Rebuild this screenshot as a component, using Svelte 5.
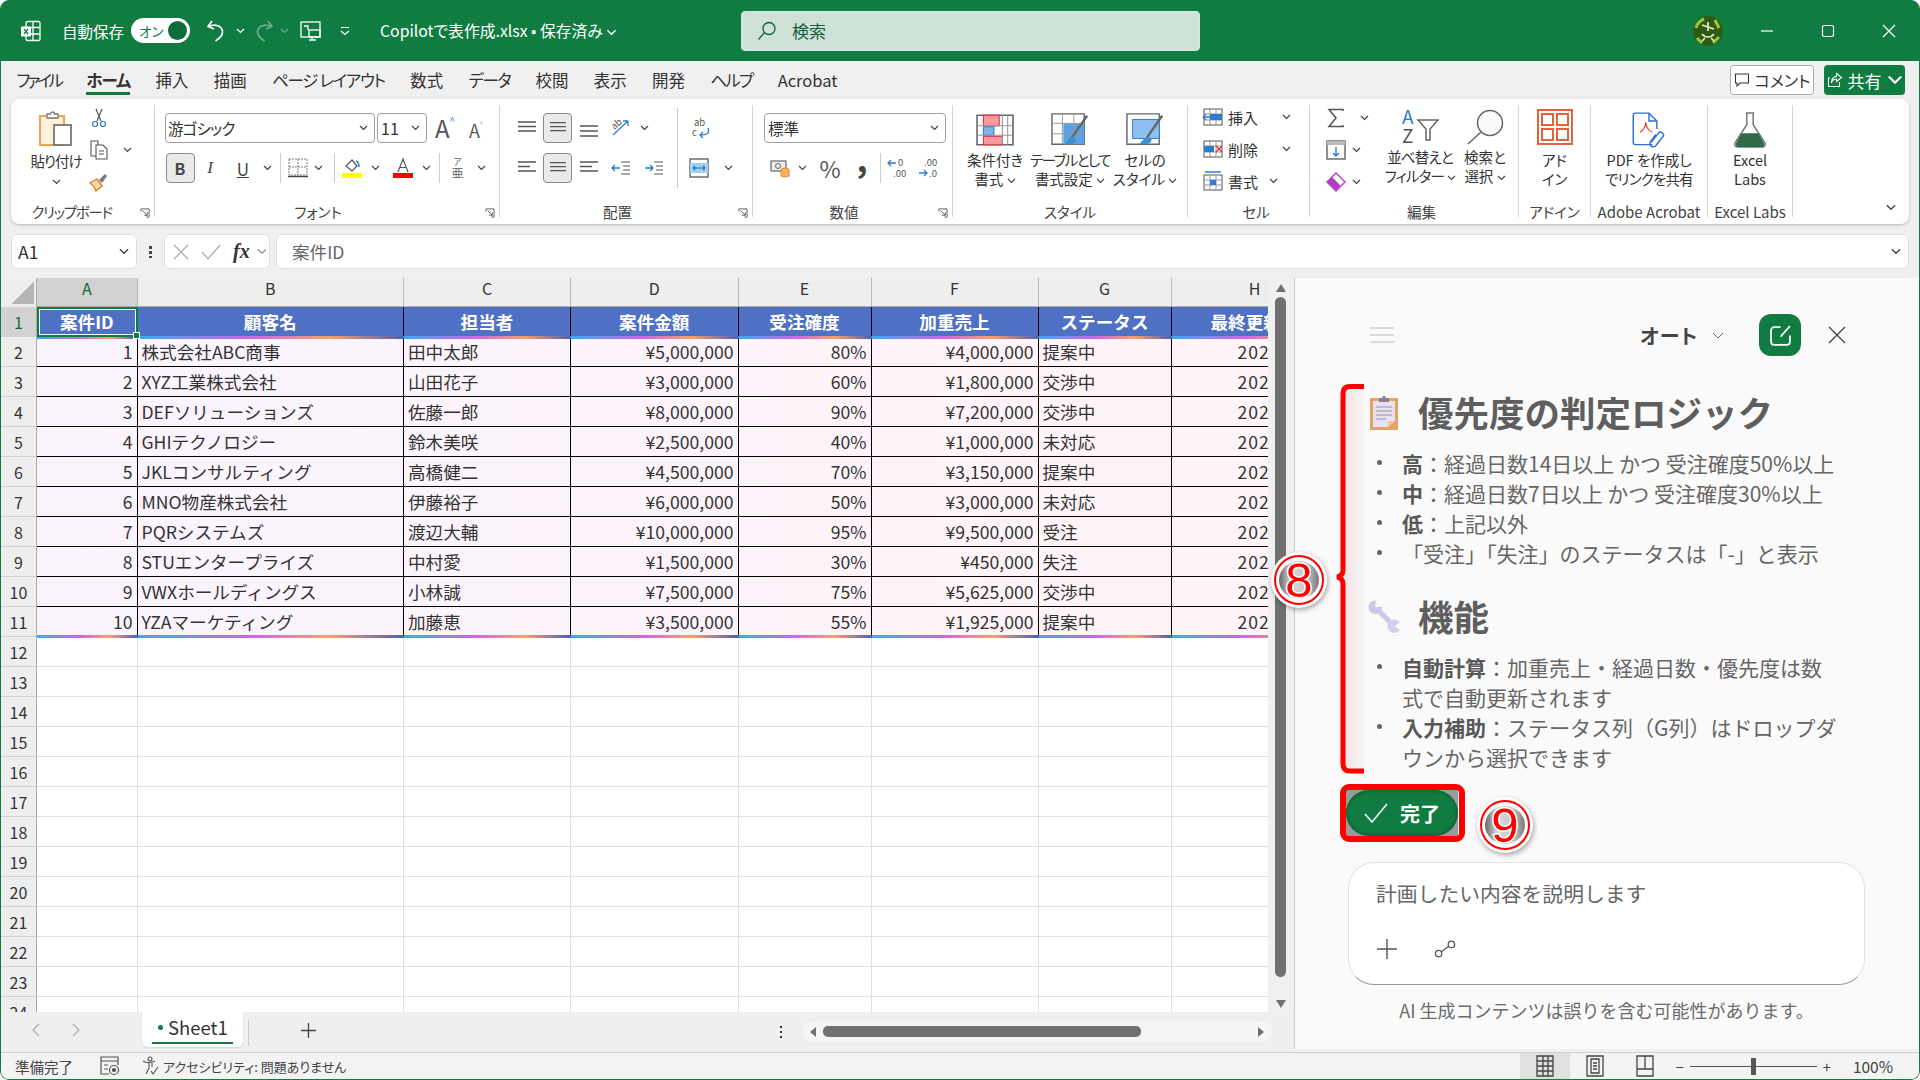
<script lang="ts">
  const cols = ["A", "B", "C", "D", "E", "F", "G", "H"];
  const headers = ["案件ID", "顧客名", "担当者", "案件金額", "受注確度", "加重売上", "ステータス", "最終更新日"];
  const rows = [
    [1, "株式会社ABC商事", "田中太郎", "¥5,000,000", "80%", "¥4,000,000", "提案中", "2025/10/01"],
    [2, "XYZ工業株式会社", "山田花子", "¥3,000,000", "60%", "¥1,800,000", "交渉中", "2025/10/05"],
    [3, "DEFソリューションズ", "佐藤一郎", "¥8,000,000", "90%", "¥7,200,000", "交渉中", "2025/10/10"],
    [4, "GHIテクノロジー", "鈴木美咲", "¥2,500,000", "40%", "¥1,000,000", "未対応", "2025/10/12"],
    [5, "JKLコンサルティング", "高橋健二", "¥4,500,000", "70%", "¥3,150,000", "提案中", "2025/10/15"],
    [6, "MNO物産株式会社", "伊藤裕子", "¥6,000,000", "50%", "¥3,000,000", "未対応", "2025/10/18"],
    [7, "PQRシステムズ", "渡辺大輔", "¥10,000,000", "95%", "¥9,500,000", "受注", "2025/10/20"],
    [8, "STUエンタープライズ", "中村愛", "¥1,500,000", "30%", "¥450,000", "失注", "2025/10/22"],
    [9, "VWXホールディングス", "小林誠", "¥7,500,000", "75%", "¥5,625,000", "交渉中", "2025/10/25"],
    [10, "YZAマーケティング", "加藤恵", "¥3,500,000", "55%", "¥1,925,000", "提案中", "2025/10/28"],
  ];
  const rightCols = [0, 3, 4, 5];
  const emptyRows = Array.from({ length: 13 }, (_, i) => i + 12);
  // kana in the ribbon font is narrower than in the CJK fallback, so each tab gets its own tracking
  const tabs = [
    { t: "ファイル", ls: -3.2 },
    { t: "ホーム", ls: -1 },
    { t: "挿入", ls: 0 },
    { t: "描画", ls: 0 },
    { t: "ページ レイアウト", ls: -1.3 },
    { t: "数式", ls: 0 },
    { t: "データ", ls: -1.5 },
    { t: "校閲", ls: 0 },
    { t: "表示", ls: 0 },
    { t: "開発", ls: 0 },
    { t: "ヘルプ", ls: -1.8 },
    { t: "Acrobat", ls: 0 },
  ];
</script>

{#snippet chev()}
  <svg class="chev" viewBox="0 0 9 6"><path d="M1 1l3.5 3.5L8 1" /></svg>
{/snippet}

{#snippet launcher()}
  <svg class="launcher" viewBox="0 0 11 11"><path d="M1 4V1h9v9H7M3 3l5 5M8 4.5V8H4.5" /></svg>
{/snippet}

{#snippet lines(w1: number, w2: number, w3: number, x: number)}
  <svg class="ico18" viewBox="0 0 18 16">
    <path d="M{x} 2h{w1}M{(18 - w2) * (x === 0 ? 0 : x === 1 ? 0.5 : 1)} 6.5h{w2}M{x} 11h{w3}" stroke="#555" stroke-width="1.4" fill="none" />
  </svg>
{/snippet}

<div class="window">
  <header class="titlebar">
    <svg class="xl-logo" viewBox="0 0 22 22" fill="none" stroke="#fff" stroke-width="1.3">
      <rect x="6" y="1.5" width="14" height="19" rx="1.5" />
      <path d="M13 1.5v19M6 7.5h14M6 14h14" />
      <rect x="1" y="6.5" width="10" height="10" rx="1" fill="#fff" stroke="none" />
      <path d="M4 9l4 5M8 9l-4 5" stroke="#107c41" />
    </svg>
    <span class="autosave">自動保存</span>
    <span class="toggle"><span class="on">オン</span><span class="knob"></span></span>
    <svg class="undo" viewBox="0 0 20 24" fill="none" stroke="#fff" stroke-width="1.6">
      <path d="M6 2L2 7.5l6 2.5M2.5 7.5c6-3 14-1 14 5.5 0 4-3 6-7 9" />
    </svg>
    <span class="qchev">{@render chev()}</span>
    <svg class="redo" viewBox="0 0 20 24" fill="none" stroke="#6fb08d" stroke-width="1.6">
      <path d="M14 2l4 5.500l-6 2.500M17.500 7.500c-6-3-14-1-14 5.500 0 4 3 6 7 9" />
    </svg>
    <span class="qchev dim">{@render chev()}</span>
    <svg class="screen" viewBox="0 0 22 22" fill="none" stroke="#fff" stroke-width="1.3">
      <rect x="1" y="2" width="19" height="15" />
      <rect x="9" y="10" width="11" height="7" />
      <path d="M4 6h4v4M12 17v3M9 20h7" />
    </svg>
    <svg class="qat-more" viewBox="0 0 10 10" fill="none" stroke="#fff" stroke-width="1.1">
      <path d="M1 1.500h8M1 5l4 3.500L9 5" />
    </svg>
    <span class="fname">Copilotで表作成.xlsx • 保存済み {@render chev()}</span>
    <div class="search">
      <svg viewBox="0 0 20 20" fill="none" stroke="#14603a" stroke-width="1.3"><circle cx="12" cy="7.500" r="6" /><path d="M7.500 11.500L1.500 18.500" /></svg>
      <span>検索</span>
    </div>
    <svg class="avatar" viewBox="0 0 30 30">
      <circle cx="15" cy="15" r="15" fill="#2f5a16" />
      <path d="M3 12a13 13 0 0 1 8-9M22 4l4 8M4 22l5 5M20 27l6-6" stroke="#9ac73a" stroke-width="3" fill="none" />
      <path d="M9 9l12 4M15 6v9M9 18c3 4 9 4 12 0M12 22l-3 3M18 22l3 3" stroke="#e6efc8" stroke-width="1.600" fill="none" />
    </svg>
    <div class="winbtn"><svg viewBox="0 0 14 14"><path d="M1 7h12" /></svg></div>
    <div class="winbtn"><svg viewBox="0 0 14 14"><rect x="1.500" y="1.500" width="11" height="11" rx="1.500" /></svg></div>
    <div class="winbtn"><svg viewBox="0 0 14 14"><path d="M1 1l12 12M13 1L1 13" /></svg></div>
  </header>

  <nav class="tabs">
    {#each tabs as tab, i}
      <span class="tab" class:active={i === 1} style:letter-spacing="{tab.ls}px">{tab.t}</span>
    {/each}
    <div class="tab-actions">
      <button class="comment">
        <svg viewBox="0 0 16 16" fill="none" stroke="#333" stroke-width="1.100"><path d="M1.500 2h13v9H6l-3 3v-3H1.500z" /></svg>
        コメント
      </button>
      <button class="share">
        <svg viewBox="0 0 16 16" fill="none" stroke="#fff" stroke-width="1.100"><path d="M3 6H1.500v8.500h11V10M9.500 1.500l5 4-5 4V7C6.500 7 5 8.500 4.500 11c0-4 1.500-6.500 5-6.500z" /></svg>
        共有 {@render chev()}
      </button>
    </div>
  </nav>

  <section class="ribbon">
    <div class="group g-clip">
      <div class="body clip-body">
        <div class="paste">
          <svg viewBox="0 0 34 36">
            <rect x="1" y="6" width="24" height="29" fill="#fdf1dd" stroke="#eda44b" stroke-width="2" />
            <path d="M8 8V4h3.500a2 2 0 0 1 4 0H19v4z" fill="#fff" stroke="#777" stroke-width="1.300" />
            <rect x="15" y="15" width="17" height="20" fill="#fff" stroke="#666" stroke-width="1.600" />
          </svg>
          <span>貼り付け</span>
          {@render chev()}
        </div>
        <div class="clip-col">
          <svg class="ico20" viewBox="0 0 20 20" fill="none" stroke-width="1.200">
            <path d="M7 1l5 12M13 1L8 13" stroke="#555" />
            <circle cx="6" cy="16" r="2.500" stroke="#2b7cd3" />
            <circle cx="14" cy="16" r="2.500" stroke="#2b7cd3" />
          </svg>
          <div class="copy-row">
            <svg class="ico20" viewBox="0 0 20 20" fill="#fff" stroke="#555" stroke-width="1.100">
              <path d="M2 1h7v15H2z" />
              <path d="M7 5h7l4 4v10H7z" />
              <path d="M10 11h5M10 14h5" />
            </svg>
            {@render chev()}
          </div>
          <svg class="ico20" viewBox="0 0 20 20">
            <path d="M1 11l7-4 5 7-6 5c-1-3-3-6-6-8z" fill="#fbd9a8" stroke="#e57f1f" stroke-width="1.400" />
            <path d="M10 8l6-6 2 2-5 7z" fill="#777" />
          </svg>
        </div>
      </div>
      <div class="label launch narrow">クリップボード{@render launcher()}</div>
    </div>

    <div class="group g-font">
      <div class="body">
        <div class="row font-row1">
          <div class="select font-name"><span class="narrow-1">游ゴシック</span> {@render chev()}</div>
          <div class="select font-size">11 {@render chev()}</div>
          <span class="grow-a">A<sup>^</sup></span>
          <span class="shrink-a">A<sup>˅</sup></span>
        </div>
        <div class="row font-row2">
          <span class="toggle-btn bold">B</span>
          <span class="fmt italic">I</span>
          <span class="fmt under">U</span>
          {@render chev()}
          <span class="sep"></span>
          <svg class="ico20" viewBox="0 0 20 20" fill="none" stroke="#777" stroke-width="1" stroke-dasharray="2 1">
            <rect x="1" y="1" width="18" height="16" />
            <path d="M10 1v16M1 9h18" />
            <path d="M0 18.500h20" stroke="#444" stroke-width="1.500" stroke-dasharray="none" />
          </svg>
          {@render chev()}
          <span class="sep"></span>
          <svg class="ico20" viewBox="0 0 20 20">
            <path d="M4 8l6-6 5 6-5 5z" fill="#fff" stroke="#555" stroke-width="1.200" />
            <path d="M14 3c3 1 3 4 3 6" stroke="#2b7cd3" stroke-width="1.500" fill="none" />
            <rect x="0" y="15" width="20" height="5" fill="#ffff00" />
          </svg>
          {@render chev()}
          <svg class="ico20 color-a" viewBox="0 0 20 20">
            <path d="M5 14L10 1l5 13M7 9.500h6" fill="none" stroke="#555" stroke-width="1.200" />
            <rect x="0" y="15" width="20" height="5" fill="#ff0000" />
          </svg>
          {@render chev()}
          <span class="sep"></span>
          <span class="furi"><small>ア</small>亜</span>
          {@render chev()}
        </div>
      </div>
      <div class="label launch">フォント{@render launcher()}</div>
    </div>

    <div class="group g-align">
      <div class="body">
        <div class="row align-row1">
          {@render lines(18, 18, 18, 0)}
          <span class="toggle-btn">{@render lines(18, 18, 18, 0)}</span>
          <svg class="ico18 low" viewBox="0 0 18 16"><path d="M0 4h18M0 9h18M0 14h18" stroke="#555" stroke-width="1.400" /></svg>
          <svg class="ico20" viewBox="0 0 20 20">
            <path d="M2 17L17 3M17 3h-5M17 3v5" stroke="#2b7cd3" stroke-width="1.300" fill="none" />
            <text x="1" y="10" class="tiny" transform="rotate(-40 5 8)">ab</text>
          </svg>
          {@render chev()}
          <span class="sep tall"></span>
          <svg class="ico20 wrap" viewBox="0 0 20 20">
            <text x="3" y="8" class="tiny">ab</text>
            <text x="1" y="18" class="tiny">c</text>
            <path d="M17 10c2 6-2 7-8 7m3-3l-3 3 3 3" stroke="#2b7cd3" stroke-width="1.300" fill="none" />
          </svg>
        </div>
        <div class="row align-row2">
          {@render lines(18, 12, 18, 0)}
          <span class="toggle-btn">{@render lines(18, 18, 18, 0)}</span>
          {@render lines(18, 12, 18, 0)}
          <svg class="ico20" viewBox="0 0 20 20">
            <path d="M10 4h9M10 16h9M12 8h7M12 12h7" stroke="#555" stroke-width="1.200" />
            <path d="M9 10H1m3-3l-3 3 3 3" stroke="#2b7cd3" stroke-width="1.300" fill="none" />
          </svg>
          <svg class="ico20" viewBox="0 0 20 20">
            <path d="M10 4h9M10 16h9M12 8h7M12 12h7" stroke="#555" stroke-width="1.200" />
            <path d="M1 10h8M6 7l3 3-3 3" stroke="#2b7cd3" stroke-width="1.300" fill="none" />
          </svg>
          <span class="sep tall"></span>
          <svg class="ico20" viewBox="0 0 20 20">
            <rect x="1" y="1" width="18" height="18" fill="#fff" stroke="#555" stroke-width="1.300" />
            <rect x="1" y="5" width="18" height="10" fill="#9fd0f2" />
            <path d="M4 10h12M4 10l2-2M4 10l2 2M16 10l-2-2M16 10l-2 2" stroke="#1c6fc4" stroke-width="1.100" fill="none" />
          </svg>
          {@render chev()}
        </div>
      </div>
      <div class="label launch">配置{@render launcher()}</div>
    </div>

    <div class="group g-num">
      <div class="body">
        <div class="row"><div class="select num-fmt">標準 {@render chev()}</div></div>
        <div class="row num-row2">
          <svg class="ico20" viewBox="0 0 20 20">
            <rect x="1" y="3" width="15" height="10" fill="#eee" stroke="#666" stroke-width="1.200" />
            <circle cx="8" cy="8" r="2.500" fill="none" stroke="#666" />
            <ellipse cx="15" cy="12" rx="4" ry="2" fill="#f6b26b" stroke="#e57f1f" />
            <path d="M11 12v6c0 1 8 1 8 0v-6" fill="#f6b26b" stroke="#e57f1f" />
          </svg>
          {@render chev()}
          <span class="pct">%</span>
          <span class="comma">,</span>
          <span class="sep"></span>
          <span class="dec"><svg viewBox="0 0 22 24"><path d="M9 7H1m3-3L1 7l3 3" stroke="#2b7cd3" stroke-width="1.300" fill="none" /><text x="11" y="10" class="tiny">0</text><text x="6" y="21" class="tiny">.00</text></svg></span>
          <span class="dec"><svg viewBox="0 0 22 24"><path d="M1 17h8M6 14l3 3-3 3" stroke="#2b7cd3" stroke-width="1.300" fill="none" /><text x="6" y="10" class="tiny">.00</text><text x="11" y="21" class="tiny">.0</text></svg></span>
        </div>
      </div>
      <div class="label launch">数値{@render launcher()}</div>
    </div>

    <div class="group g-style">
      <div class="body styles">
        <div class="big w60">
          <svg class="big-ico" viewBox="0 0 36 30">
            <path d="M1 1h34v28H1z" fill="#fff" stroke="#666" stroke-width="1.500" />
            <rect x="7" y="1" width="15" height="10" fill="#fb9aa2" stroke="#d8333c" />
            <rect x="7" y="12" width="10" height="8" fill="#7db7e8" stroke="#2b7cd3" />
            <rect x="7" y="21" width="18" height="8" fill="#fb9aa2" stroke="#d8333c" />
            <path d="M25 1v28M30 1v28M1 11h34M1 20h34" stroke="#999" fill="none" />
          </svg>
          <span>条件付き<br />書式 {@render chev()}</span>
        </div>
        <div class="big w80">
          <svg class="big-ico" viewBox="0 0 40 36">
            <path d="M1 1h34v32H1z" fill="#fff" stroke="#666" stroke-width="1.500" />
            <rect x="13" y="11" width="22" height="22" fill="#5aa3e0" />
            <path d="M12 1v32M24 1v32M1 11h34M1 22h34" stroke="#999" fill="none" />
            <path d="M38 3L22 26" stroke="#666" stroke-width="2.500" />
            <path d="M23 25c-4 0-5 5-9 7 6 2 13 1 13-4z" fill="#3f8ed4" />
          </svg>
          <span><span class="narrow">テーブルとして</span><br />書式設定 {@render chev()}</span>
        </div>
        <div class="big w60">
          <svg class="big-ico" viewBox="0 0 40 36">
            <path d="M1 1h34v32H1z" fill="#fff" stroke="#666" stroke-width="1.500" />
            <rect x="7" y="7" width="28" height="20" fill="#8dbff0" stroke="#2b7cd3" />
            <path d="M38 3L22 26" stroke="#666" stroke-width="2.500" />
            <path d="M23 25c-4 0-5 5-9 7 6 2 13 1 13-4z" fill="#3f8ed4" />
          </svg>
          <span>セルの<br />スタイル {@render chev()}</span>
        </div>
      </div>
      <div class="label">スタイル</div>
    </div>

    <div class="group g-cell">
      <div class="body cell-body">
        <div class="cellrow">
          <svg class="ico20" viewBox="0 0 20 18"><rect x="1" y="1" width="18" height="16" fill="#fff" stroke="#555" /><path d="M7 1v16M13 1v16M1 6h18M1 12h18" stroke="#999" /><rect x="7" y="6" width="12" height="6" fill="#2b7cd3" /><path d="M9 9H0m3-3L0 9l3 3" stroke="#2b7cd3" stroke-width="1.300" fill="none" /></svg>
          <span>挿入</span>{@render chev()}
        </div>
        <div class="cellrow">
          <svg class="ico20" viewBox="0 0 20 18"><rect x="1" y="1" width="18" height="16" fill="#fff" stroke="#555" /><path d="M7 1v16M13 1v16M1 6h18M1 12h18" stroke="#999" /><rect x="1" y="6" width="10" height="6" fill="#2b7cd3" /><path d="M13 6l6 6M19 6l-6 6" stroke="#e8333c" stroke-width="1.500" /></svg>
          <span>削除</span>{@render chev()}
        </div>
        <div class="cellrow fmt-row">
          <svg class="ico20" viewBox="0 0 20 20"><rect x="1" y="4" width="18" height="15" fill="#fff" stroke="#555" /><path d="M7 4v15M13 4v15M1 9h18M1 14h18" stroke="#999" /><rect x="7" y="9" width="6" height="5" fill="#2b7cd3" /><path d="M2 1h16" stroke="#2b7cd3" stroke-width="1.500" /></svg>
          <span>書式</span>{@render chev()}
        </div>
      </div>
      <div class="label">セル</div>
    </div>

    <div class="group g-edit">
      <div class="body edit-body">
        <div class="edit-col">
          <div class="editrow sum"><svg class="ico20" viewBox="0 0 18 20" fill="none" stroke="#555" stroke-width="1.500"><path d="M16 3V1.500H2L9 10l-7 8.500h14V17" /></svg>{@render chev()}</div>
          <div class="editrow"><svg class="ico20" viewBox="0 0 20 20"><rect x="1" y="1" width="18" height="18" fill="#fff" stroke="#555" stroke-width="1.300" /><rect x="1" y="1" width="18" height="4" fill="#bbb" /><path d="M10 7v9M7 13l3 3 3-3" stroke="#2b7cd3" stroke-width="1.400" fill="none" /></svg>{@render chev()}</div>
          <div class="editrow"><svg class="ico20" viewBox="0 0 20 20"><path d="M10 1l9 9-9 9-9-9z" fill="#fff" stroke="#b040c0" stroke-width="1.400" /><path d="M5.500 14.500L1 10l5-5 8.500 8.500-4.500 5z" fill="#b040c0" /></svg>{@render chev()}</div>
        </div>
        <div class="big w70">
          <svg class="big-ico" viewBox="0 0 38 36">
            <text x="1" y="15" class="az blue">A</text>
            <text x="1" y="34" class="az">Z</text>
            <path d="M17 11h20l-8 9v11h-4V20z" fill="#fff" stroke="#666" stroke-width="1.500" />
          </svg>
          <span class="narrow-1">並べ替えと<br />フィルター {@render chev()}</span>
        </div>
        <div class="big w60">
          <svg class="big-ico" viewBox="0 0 38 36">
            <circle cx="24" cy="14" r="12.500" fill="#fafafa" stroke="#666" stroke-width="1.500" />
            <path d="M15 23L2 35" stroke="#666" stroke-width="1.500" />
          </svg>
          <span>検索と<br />選択 {@render chev()}</span>
        </div>
      </div>
      <div class="label">編集</div>
    </div>

    <div class="group g-add">
      <div class="body">
        <div class="big full">
          <svg class="big-ico tall" viewBox="0 0 36 36" fill="none" stroke="#e2623a" stroke-width="2">
            <rect x="1" y="1" width="34" height="34" />
            <rect x="5" y="5" width="11" height="11" />
            <rect x="20" y="5" width="11" height="11" />
            <rect x="5" y="20" width="11" height="11" />
            <rect x="20" y="20" width="11" height="11" />
          </svg>
          <span>アド<br />イン</span>
        </div>
      </div>
      <div class="label">アドイン</div>
    </div>

    <div class="group g-acro">
      <div class="body">
        <div class="big full">
          <svg class="big-ico" viewBox="0 0 30 32" fill="none" stroke="#2f6fe0" stroke-width="1.300">
            <path d="M18 29H3a2 2 0 0 1-2-2V3a2 2 0 0 1 2-2h12l7 7v7" />
            <path d="M15 1v7h7" />
            <path d="M7 18c3-2 5-6 5-9 0 4 3 8 6 9" stroke="#d33" stroke-width="1" />
            <path d="M17 27l7-9a3 3 0 0 1 4 3l-7 9a3 3 0 0 1-5-3l5-7" />
          </svg>
          <span>PDF を作成し<br /><span class="narrow-1">でリンクを共有</span></span>
        </div>
      </div>
      <div class="label latin">Adobe Acrobat</div>
    </div>

    <div class="group g-labs">
      <div class="body">
        <div class="big full">
          <svg class="big-ico" viewBox="0 0 32 34">
            <path d="M12 1h8M13 1v11L2 29c-1 2 0 4 2 4h24c2 0 3-2 2-4L19 12V1" fill="#fff" stroke="#777" stroke-width="1.400" />
            <path d="M8 20h16l5 9c1 2 0 4-2 4H5c-2 0-3-2-2-4z" fill="#2f6b4a" />
          </svg>
          <span>Excel<br />Labs</span>
        </div>
      </div>
      <div class="label latin">Excel Labs</div>
    </div>

    <svg class="collapse chev" viewBox="0 0 9 6"><path d="M1 1l3.500 3.500L8 1" /></svg>
  </section>

  <div class="formula">
    <div class="namebox">A1 {@render chev()}</div>
    <span class="vdots"></span>
    <div class="fxbox">
      <svg viewBox="0 0 16 16" fill="none" stroke="#aaa" stroke-width="1.200"><path d="M1 1l14 14M15 1L1 15" /></svg>
      <svg viewBox="0 0 20 16" fill="none" stroke="#aaa" stroke-width="1.200"><path d="M1 8l6 7L19 1" /></svg>
      <span class="fx">fx</span>
      {@render chev()}
    </div>
    <div class="fbar"><span>案件ID</span>{@render chev()}</div>
  </div>

  <main class="workspace">
    <div class="sheet-col">
      <div class="sheet-area">
        <div class="grid">
          <div class="corner"><span></span></div>
          {#each cols as c, i}
            <div class="ch" class:sel={i === 0}>{c}</div>
          {/each}
          <div class="rh sel">1</div>
          {#each headers as h}
            <div class="hd">{h}</div>
          {/each}
          {#each rows as r, i}
            <div class="rh">{i + 2}</div>
            {#each r as v, j}
              <div
                class="td"
                class:right={rightCols.includes(j)}
                class:date={j === 7}
                class:last={i === rows.length - 1}
              >{v}</div>
            {/each}
          {/each}
          {#each emptyRows as n}
            <div class="rh">{n}</div>
            {#each cols as _}
              <div class="blank"></div>
            {/each}
          {/each}
          <div class="selection"><span></span></div>
        </div>
        <div class="vscroll">
          <i class="tri-up"></i>
          <b></b>
          <i class="tri-down"></i>
        </div>
      </div>
      <div class="sheetbar">
        <svg class="nav" viewBox="0 0 8 14"><path d="M7 1L1 7l6 6" /></svg>
        <svg class="nav" viewBox="0 0 8 14"><path d="M1 1l6 6-6 6" /></svg>
        <div class="sheet-tab"><i></i>Sheet1</div>
        <span class="tab-sep"></span>
        <svg class="add" viewBox="0 0 16 16"><path d="M8 0v16M0 8h16" /></svg>
        <span class="more"></span>
        <div class="hscroll">
          <i class="tri-left"></i>
          <b></b>
          <i class="tri-right"></i>
        </div>
      </div>
    </div>

    <aside class="panel">
      <div class="panel-head">
        <svg class="menu" viewBox="0 0 24 16"><path d="M0 1h24M0 8h24M0 15h24" /></svg>
        <strong class="mode">オート</strong>
        <svg class="mode-chev" viewBox="0 0 12 7"><path d="M1 1l5 5 5-5" /></svg>
        <button class="new-chat" aria-label="new">
          <svg viewBox="0 0 22 22" fill="none" stroke="#fff" stroke-width="1.700"><path d="M11 3H5a3 3 0 0 0-3 3v11a3 3 0 0 0 3 3h12a3 3 0 0 0 3-3v-6M20 2l-9 10" /></svg>
        </button>
        <svg class="close" viewBox="0 0 18 18"><path d="M1 1l16 16M17 1L1 17" /></svg>
      </div>

      <h2>
        <svg viewBox="0 0 28 36">
          <rect x="0" y="4" width="28" height="32" fill="#e3a26a" />
          <path d="M3 7h22v20l-7 6H3z" fill="#e7e1f2" />
          <path d="M25 27h-7v6z" fill="#f3c79c" />
          <path d="M9 8V4h3a2 2 0 0 1 4 0h3v4z" fill="#8a8090" />
          <path d="M6 13h16M6 17h16M6 21h16M6 25h10" stroke="#9a90a8" stroke-width="1" />
        </svg>
        優先度の判定ロジック
      </h2>
      <ul>
        <li><b>高</b>：経過日数14日以上 かつ 受注確度50%以上</li>
        <li><b>中</b>：経過日数7日以上 かつ 受注確度30%以上</li>
        <li><b>低</b>：上記以外</li>
        <li>「受注」「失注」のステータスは「-」と表示</li>
      </ul>
      <h2 class="second">
        <svg class="wrench" viewBox="0 0 34 34">
          <path d="M8 8l19 19" stroke="#d0c9e8" stroke-width="5.500" />
          <circle cx="7.500" cy="7.500" r="7" fill="#cdc6e6" />
          <circle cx="27" cy="27" r="7" fill="#d6d0ec" />
          <path d="M7.500 7.500L8 0h8v7z" fill="#fafafa" />
          <path d="M27 27l8-5v10z" fill="#fafafa" />
        </svg>
        機能
      </h2>
      <ul>
        <li><b>自動計算</b>：加重売上・経過日数・優先度は数式で自動更新されます</li>
        <li><b>入力補助</b>：ステータス列（G列）はドロップダウンから選択できます</li>
      </ul>

      <div class="done-wrap">
        <button class="done">
          <svg viewBox="0 0 24 20" fill="none" stroke="#fff" stroke-width="1.500"><path d="M1 11l7 8L23 1" /></svg>
          完了
        </button>
      </div>

      <div class="composer">
        <div class="placeholder">計画したい内容を説明します</div>
        <div class="composer-tools">
          <svg viewBox="0 0 22 22"><path d="M11 1v20M1 11h20" /></svg>
          <svg viewBox="0 0 24 20"><circle cx="5" cy="15" r="3.500" /><circle cx="19" cy="5" r="3.500" /><path d="M8 13l8-6" /></svg>
        </div>
      </div>
      <div class="disclaimer">AI 生成コンテンツは誤りを含む可能性があります。</div>

      <!-- annotations drawn on top of the screenshot -->
      <svg class="bracket" viewBox="0 0 32 400">
        <defs>
          <linearGradient id="band">
            <stop offset="0" stop-color="#f1e6e6" />
            <stop offset="1" stop-color="#f8f3f3" />
          </linearGradient>
        </defs>
        <rect x="10" y="9" width="19" height="380" fill="url(#band)" />
        <path d="M29 6.500H15Q8 6.500 8 13.500V190Q8 196 2 197Q8 198 8 204V384Q8 391 15 391H29" fill="none" stroke="#f00" stroke-width="5" />
      </svg>
      <div class="red-box"></div>
      <div class="badge b8"><span>8</span></div>
      <div class="badge b9"><span>9</span></div>
    </aside>
  </main>

  <footer class="status">
    <span class="ready">準備完了</span>
    <svg class="macro" viewBox="0 0 20 20" fill="none" stroke="#555" stroke-width="1.200">
      <path d="M1 1h17v4H1zM1 5v13h8M18 5v4M4 9h4M4 13h4" />
      <circle cx="14" cy="14" r="4.500" /><circle cx="14" cy="14" r="1.500" fill="#555" />
    </svg>
    <svg class="a11y" viewBox="0 0 18 20" fill="none" stroke="#555" stroke-width="1.100">
      <circle cx="8" cy="3" r="2" />
      <path d="M1 5c3 2 8 2 12 0M7 7v5l-3 6M10 7v4M9 15l2 3 5-7" />
    </svg>
    <span class="a11y-text">アクセシビリティ: 問題ありません</span>
    <div class="views">
      <span class="view current">
        <svg viewBox="0 0 18 22"><path d="M1 1h16v20H1zM1 6h16M1 11h16M1 16h16M7 1v20M12 1v20" /></svg>
      </span>
      <span class="view">
        <svg viewBox="0 0 18 22"><path d="M1 1h16v20H1zM5 4h8v14H5zM7 8h4M7 11h4M7 14h4" /></svg>
      </span>
      <span class="view">
        <svg viewBox="0 0 18 22"><path d="M1 1h16v20H1zM1 14h16M9 1v13" /></svg>
      </span>
    </div>
    <div class="zoom">
      <span>−</span>
      <div class="slider"><i></i></div>
      <span>+</span>
      <em>100%</em>
    </div>
  </footer>
</div>

<style>
  :global(body) {
    background: #fff;
    font-family: "Noto Sans CJK JP", "Noto Sans", sans-serif;
  }

  .window {
    position: relative;
    width: 1920px;
    height: 1080px;
    box-sizing: border-box;
    border: solid #107c41;
    border-width: 0 1.5px 1.5px;
    border-radius: 9px;
    overflow: hidden;
    background: #f0f0f0;
    color: #333;
    display: flex;
    flex-direction: column;
    font-feature-settings: "palt";
  }

  svg {
    flex: none;
    display: block;
  }

  button {
    font: inherit;
    border: none;
    padding: 0;
  }

  .chev {
    width: 9px;
    height: 6px;
    display: inline-block;
    fill: none;
    stroke: #444;
    stroke-width: 1.200;
    vertical-align: middle;
  }

  .narrow { letter-spacing: -1.600px; }
  .narrow-1 { letter-spacing: -0.800px; }

  /* title bar */
  .titlebar {
    height: 61px;
    flex: none;
    background: #107c41;
    display: flex;
    align-items: center;
    color: #fff;
    font-size: 15.500px;
    padding-left: 19px;
  }
  .xl-logo { width: 22px; height: 22px; margin-right: 20px; }
  .autosave { width: 69px; }
  .toggle {
    width: 59px;
    height: 25px;
    border-radius: 13px;
    background: #fff;
    display: flex;
    align-items: center;
    justify-content: space-between;
    padding: 0 3px 0 8px;
    box-sizing: border-box;
    color: #107c41;
    font-size: 13.500px;
  }
  .knob { width: 19px; height: 19px; border-radius: 50%; background: #0f6b38; }
  .undo { width: 20px; height: 24px; margin-left: 16px; }
  .qchev { width: 28px; display: flex; justify-content: center; }
  .qchev .chev { stroke: #fff; }
  .qchev.dim .chev { stroke: #6fb08d; }
  .redo { width: 20px; height: 24px; }
  .qchev.dim { width: 20px; margin-left: 0; }
  .screen { width: 22px; height: 22px; margin-left: 6px; }
  .qat-more { width: 10px; height: 10px; margin-left: 18px; }
  .fname { width: 361px; box-sizing: border-box; margin-left: 30px; white-space: nowrap; font-size: 15.800px; }
  .fname .chev { stroke: #fff; width: 11px; height: 7px; }
  .search {
    width: 459px;
    height: 40px;
    box-sizing: border-box;
    background: #cfe2d7;
    border: 1px solid #dbe6df;
    border-radius: 4px;
    display: flex;
    align-items: center;
    gap: 15px;
    padding-left: 15px;
    color: #14603a;
    font-size: 17px;
  }
  .search svg { width: 20px; height: 20px; }
  .avatar { width: 30px; height: 30px; margin-left: auto; margin-right: 13px; }
  .winbtn { width: 61px; display: flex; justify-content: center; }
  .winbtn svg { width: 14px; height: 14px; fill: none; stroke: #fff; stroke-width: 1.200; }

  /* menu tabs */
  .tabs {
    height: 38px;
    flex: none;
    display: flex;
    align-items: center;
    gap: 25.300px;
    padding-left: 15.500px;
    font-size: 16.500px;
    color: #333;
  }
  .tab { position: relative; white-space: nowrap; }
  .tab.active { font-weight: 700; }
  .tab.active::after {
    content: "";
    position: absolute;
    left: 0;
    right: 0;
    bottom: -3px;
    height: 3px;
    background: #107c41;
  }
  .tab-actions { margin-left: auto; display: flex; gap: 10px; padding-right: 14px; }
  .comment, .share {
    height: 30px;
    border-radius: 4px;
    display: flex;
    align-items: center;
    justify-content: center;
    gap: 5px;
    font-size: 16px;
    box-sizing: border-box;
  }
  .comment svg, .share svg { width: 16px; height: 16px; }
  .comment { width: 84px; background: #fff; border: 1px solid #aaa; color: #333; }
  .share { width: 81px; background: #107c41; color: #fff; font-size: 17px; }
  .share .chev { stroke: #fff; }

  /* ribbon */
  .ribbon {
    position: relative;
    flex: none;
    height: 125px;
    margin: 0 10px;
    box-sizing: border-box;
    padding-top: 6px;
    background: #fff;
    border-radius: 8px;
    box-shadow: 0 1px 3px rgba(0, 0, 0, 0.25);
    display: flex;
    font-size: 14.500px;
  }
  .group {
    position: relative;
    height: 112px;
    box-sizing: border-box;
    border-right: 1px solid #d4d4d4;
    display: flex;
    flex-direction: column;
  }
  .body { flex: 1; min-height: 0; padding-top: 3px; }
  .label {
    position: relative;
    height: 14px;
    line-height: 14px;
    margin-bottom: -2px;
    text-align: center;
    font-size: 14.500px;
    color: #444;
    white-space: nowrap;
  }
  .label.launch { padding-right: 28px; }
  .label.launch.narrow { padding-right: 22px; letter-spacing: -1.300px; }
  .label.latin { font-size: 15px; }
  .launcher {
    position: absolute;
    right: 4px;
    top: 3px;
    width: 10px;
    height: 10px;
    fill: none;
    stroke: #555;
    stroke-width: 1;
  }
  .g-clip { width: 144px; }
  .g-font { width: 345px; padding-left: 10px; }
  .g-align { width: 253px; padding-left: 11px; }
  .g-num { width: 200px; padding-left: 11px; }
  .g-style { width: 235px; }
  .g-cell { width: 122px; padding-left: 15px; }
  .g-edit { width: 209px; padding-left: 15px; }
  .g-add { width: 72px; }
  .g-acro { width: 117px; }
  .g-labs { width: 85px; }

  .row {
    height: 40px;
    display: grid;
    align-items: center;
    justify-items: center;
  }
  .sep { width: 1px; height: 30px; background: #ccc; }
  .sep.tall { height: 40px; }
  .ico20 { width: 20px; height: 20px; }
  .ico18 { width: 18px; height: 16px; }
  .ico18.low { margin-top: 4px; }
  .tiny { font-size: 9.500px; fill: #555; }
  .select {
    height: 30px;
    box-sizing: border-box;
    border: 1px solid #a0a0a0;
    border-radius: 4px;
    display: flex;
    align-items: center;
    justify-content: space-between;
    padding: 0 6px 0 3px;
    font-size: 15.500px;
    justify-self: start;
  }
  .toggle-btn {
    width: 29px;
    height: 30px;
    box-sizing: border-box;
    border: 1px solid #8a8a8a;
    border-radius: 4px;
    background: #eaeaea;
    display: flex;
    align-items: center;
    justify-content: center;
  }
  .toggle-btn .ico18 { width: 16px; }

  .clip-body { display: flex; padding-top: 0; }
  .paste {
    width: 74px;
    margin-left: 8px;
    margin-top: 5px;
    display: flex;
    flex-direction: column;
    align-items: center;
    font-size: 14.500px;
  }
  .paste svg:first-child { width: 34px; height: 36px; margin-bottom: 5px; }
  .paste span { line-height: 20px; white-space: nowrap; letter-spacing: -1px; }
  .paste .chev { margin-top: 8px; }
  .clip-col { margin-left: -4px; padding-top: 3px; display: flex; flex-direction: column; gap: 12px; }
  .copy-row { display: flex; align-items: center; gap: 14px; }

  .font-row1 { grid-template-columns: 210px 52px 33px 33px; justify-items: start; }
  .font-size { width: 50px; margin-left: 2px; font-size: 16px; }
  .font-name { width: 210px; padding-left: 2px; }
  .grow-a, .shrink-a { font-size: 24px; line-height: 1; color: #555; display: flex; }
  .grow-a { margin-left: 8px; }
  .shrink-a { font-size: 18px; margin-left: 9px; margin-top: 3px; }
  sup { font-size: 10px; color: #2b7cd3; line-height: 1; }
  .font-row2 { grid-template-columns: 30px 30px 36px 12px 14px 22px 18px 14px 22px 24px 32px 14px 12px 25px 22px; }
  .bold { font-weight: 700; font-size: 16px; color: #444; }
  .fmt { font-size: 17px; color: #444; }
  .italic { font-style: italic; font-family: "Liberation Serif", serif; }
  .under { text-decoration: underline; }
  .furi { display: flex; flex-direction: column; align-items: center; font-size: 12px; line-height: 13px; color: #666; }
  .furi small { font-size: 9px; line-height: 9px; }

  .align-row1 { grid-template-columns: 32px 29px 33px 32px 34px 12px 36px; }
  .align-row1 .chev { justify-self: start; margin-left: 3px; }
  .align-row2 { grid-template-columns: 32px 29px 33px 32px 34px 12px 32px 26px; }

  .num-fmt { width: 182px; }
  .num-row2 { grid-template-columns: 32px 12px 44px 20px 16px 20px 42px; }
  .pct { font-size: 23px; line-height: 1; color: #555; }
  .comma { font-size: 34px; font-weight: 700; line-height: 1; color: #444; margin-top: -20px; }
  .dec svg { width: 22px; height: 24px; }

  .styles { display: flex; padding-left: 12px; gap: 5px; }
  .big {
    display: flex;
    flex-direction: column;
    align-items: center;
    text-align: center;
    line-height: 19px;
    font-size: 14.500px;
    white-space: nowrap;
  }
  .big.w60 { width: 60px; }
  .big.w70 { width: 70px; }
  .big.w80 { width: 80px; }
  .big.full { width: 100%; }
  .big-ico { height: 36px; width: 38px; margin: 4px 0 2px; }
  .big-ico.tall { margin-top: 1px; margin-bottom: 5px; }

  .cell-body { display: flex; flex-direction: column; gap: 6px; padding-top: 0; margin-top: -1px; }
  .cellrow { height: 26px; display: flex; align-items: center; gap: 5px; font-size: 15px; width: 88px; }
  .cellrow > .chev { margin-left: auto; }
  .cellrow.fmt-row > .chev { margin-left: 6px; }

  .edit-body { display: flex; padding-top: 0; }
  .edit-col { width: 59px; padding-left: 1px; display: flex; flex-direction: column; gap: 6px; }
  .editrow { height: 26px; display: flex; align-items: center; gap: 6px; }
  .editrow.sum { gap: 14px; }
  .az { font-size: 19px; fill: #555; }
  .az.blue { fill: #2b7cd3; }

  .collapse { position: absolute; right: 12px; top: 105px; width: 12px; height: 7px; }

  /* formula bar */
  .formula {
    flex: none;
    height: 35px;
    margin: 10px 10px 9px;
    display: flex;
    font-size: 17.600px;
  }
  .namebox, .fxbox, .fbar {
    box-sizing: border-box;
    height: 35px;
    background: #fff;
    border: 1px solid #dedede;
    border-radius: 6px;
    display: flex;
    align-items: center;
  }
  .namebox { width: 126px; justify-content: space-between; padding: 0 6px; }
  .namebox .chev { width: 12px; height: 7px; }
  .vdots {
    width: 3px;
    height: 13px;
    margin: 11px 12px;
    background: radial-gradient(circle at center, #444 1.500px, transparent 1.600px) 0 0 / 3px 5px;
  }
  .fxbox { width: 106px; padding-left: 8px; gap: 12px; }
  .fxbox svg:nth-child(1) { width: 16px; height: 16px; }
  .fxbox svg:nth-child(2) { width: 20px; height: 16px; }
  .fx { font-family: "Liberation Serif", serif; font-style: italic; font-weight: 700; font-size: 20px; margin-right: -6px; }
  .fxbox .chev { width: 12px; height: 7px; stroke: #999; }
  .fbar {
    flex: 1;
    margin-left: 6px;
    padding: 0 6px 0 15px;
    justify-content: space-between;
    color: #666;
  }
  .fbar .chev { width: 12px; height: 7px; }

  /* sheet */
  .workspace { flex: 1; min-height: 0; display: flex; }
  .sheet-col { width: 1293px; display: flex; flex-direction: column; }
  .sheet-area { height: 734px; display: flex; overflow: hidden; }
  .grid {
    position: relative;
    width: 1266.500px;
    height: 734px;
    overflow: hidden;
    flex: none;
    background: #fff;
    display: grid;
    grid-template-columns: 36px 100.500px 266.500px 167px 167.500px 133px 167px 133px 167px;
    grid-template-rows: 29px repeat(24, 30px);
    font-feature-settings: normal;
    font-size: 17.600px;
  }
  .corner { background: #eee; border-right: 1px solid #aaa; display: flex; align-items: flex-end; justify-content: flex-end; padding: 0 2px 3px 0; }
  .corner span {
    width: 22px;
    height: 22px;
    background: linear-gradient(135deg, transparent 50%, #b4b4b4 50%);
  }
  .ch {
    background: #eee;
    border-right: 1px solid #b8b8b8;
    border-bottom: 1px solid #aaa;
    display: flex;
    align-items: center;
    justify-content: center;
    font-size: 16px;
    color: #333;
    padding-bottom: 8px;
    box-sizing: border-box;
  }
  .ch.sel { background: #d2d2d2; color: #0e6a3a; }
  .rh {
    background: #eee;
    border-right: 1px solid #aaa;
    border-bottom: 1px solid #d0d0d0;
    display: flex;
    align-items: center;
    justify-content: center;
    font-size: 16px;
    color: #333;
  }
  .rh.sel { background: #d2d2d2; color: #0e6a3a; }
  .hd, .td, .blank { box-sizing: border-box; min-width: 0; }
  .hd {
    position: relative;
    background: #4f71c4;
    color: #fff;
    font-weight: 700;
    text-align: center;
    line-height: 29px;
    border-right: 1px solid #000;
    white-space: nowrap;
  }
  .hd::after, .td.last::after {
    content: "";
    position: absolute;
    left: 0;
    right: -1px;
    bottom: -2px;
    height: 3px;
    z-index: 1;
    background: linear-gradient(90deg, #3aa8f0 0, #c868e8 42%, #f8a06c 72%, #4f5fb0 100%);
  }
  .td {
    position: relative;
    padding: 0 4px;
    line-height: 30px;
    white-space: nowrap;
    border-right: 1px solid #000;
    border-bottom: 1px solid #000;
    color: #333;
    background-image: linear-gradient(90deg, #faf3fe 38px, #fff4f7 1270px);
    background-attachment: fixed;
  }
  .td.right { text-align: right; }
  .td.date { padding-left: 66px; letter-spacing: 1px; }
  .blank { border-right: 1px solid #e1e1e1; border-bottom: 1px solid #e1e1e1; }
  .selection {
    position: absolute;
    left: 36px;
    top: 29px;
    width: 100.500px;
    height: 30px;
    box-sizing: border-box;
    border: 2px solid #107c41;
    box-shadow: inset 0 0 0 1px #fff;
    z-index: 2;
  }
  .selection span {
    position: absolute;
    right: -4px;
    bottom: -4px;
    width: 5px;
    height: 5px;
    background: #107c41;
    border: 1px solid #fff;
  }

  .vscroll {
    flex: 1;
    position: relative;
    display: flex;
    flex-direction: column;
    align-items: center;
    padding-top: 6px;
  }
  .vscroll b {
    width: 11px;
    height: 680px;
    margin-top: 5px;
    border-radius: 6px;
    background: #707070;
  }
  .tri-up, .tri-down, .tri-left, .tri-right { width: 0; height: 0; display: block; border-style: solid; border-color: transparent; }
  .tri-up { border-width: 0 5px 8px; border-bottom-color: #707070; }
  .tri-down { border-width: 8px 5px 0; border-top-color: #707070; margin-top: 23px; }
  .tri-left { border-width: 5px 6px 5px 0; border-right-color: #707070; }
  .tri-right { border-width: 5px 0 5px 6px; border-left-color: #707070; }

  .sheetbar {
    flex: 1;
    display: flex;
    align-items: flex-start;
    background: #efefef;
    position: relative;
  }
  .nav { width: 8px; height: 14px; fill: none; stroke: #aaa; stroke-width: 1.200; margin-top: 11px; }
  .nav:first-child { margin-left: 31px; }
  .nav:nth-child(2) { margin-left: 32px; }
  .sheet-tab {
    position: relative;
    width: 101px;
    height: 35px;
    margin-left: 62px;
    background: #fff;
    border-radius: 0 0 6px 6px;
    display: flex;
    align-items: center;
    gap: 5px;
    padding-left: 16px;
    box-sizing: border-box;
    font-size: 18.500px;
    color: #333;
    padding-bottom: 5px;
    box-shadow: 0 1px 2px rgba(0, 0, 0, 0.12);
  }
  .sheet-tab i { width: 5px; height: 5px; border-radius: 50%; background: #107c41; }
  .sheet-tab::after {
    content: "";
    position: absolute;
    left: 10px;
    right: 10px;
    bottom: 3px;
    height: 2px;
    background: #107c41;
  }
  .tab-sep { width: 1px; height: 26px; background: #ccc; margin: 8px 0 0 5px; }
  .add { width: 15px; height: 15px; fill: none; stroke: #444; stroke-width: 1.400; margin: 11px 0 0 52px; }
  .more {
    width: 2px;
    height: 14px;
    margin: 14px 0 0 464px;
    background: repeating-linear-gradient(#333 0 2px, transparent 2px 5px);
  }
  .hscroll {
    width: 470px;
    height: 21px;
    margin: 9px 0 0 20px;
    border-radius: 10px;
    background: #f5f5f5;
    display: flex;
    align-items: center;
    padding: 0 8px;
    box-sizing: border-box;
  }
  .hscroll b { width: 318px; height: 11px; margin-left: 7px; border-radius: 5px; background: #707070; }
  .hscroll .tri-right { margin-left: auto; }

  /* copilot panel */
  .panel {
    position: relative;
    flex: 1;
    min-width: 0;
    box-sizing: border-box;
    height: 771px;
    border-left: 1px solid #c8c8c8;
    background: #fafafa;
    padding: 36px 73px 0 75px;
    color: #666;
    font-size: 21px;
    font-feature-settings: normal;
  }
  .panel-head { height: 42px; display: flex; align-items: center; }
  .menu { width: 24px; height: 16px; fill: none; stroke: #bbb; stroke-width: 1.200; }
  .mode { margin-left: 246px; font-size: 20px; color: #444; font-feature-settings: "palt"; letter-spacing: 1px; white-space: nowrap; }
  .mode-chev { width: 12px; height: 7px; fill: none; stroke: #666; stroke-width: 1; margin-left: 14px; }
  .new-chat {
    margin-left: auto;
    width: 42px;
    height: 42px;
    border-radius: 12px;
    background: #107c41;
    display: flex;
    align-items: center;
    justify-content: center;
  }
  .new-chat svg { width: 23px; height: 23px; }
  .close { width: 18px; height: 18px; margin-left: 27px; fill: none; stroke: #444; stroke-width: 1.300; }

  h2 {
    margin: 32px 0 0;
    height: 48px;
    line-height: 48px;
    display: flex;
    align-items: center;
    gap: 20px;
    font-size: 35.500px;
    font-weight: 700;
    color: #5e5e5e;
    white-space: nowrap;
  }
  h2 svg { width: 28px; height: 36px; }
  h2 svg.wrench { width: 33px; height: 33px; margin: 0 -3px 0 -2px; }
  h2.second { margin-top: 24px; }
  ul { list-style: none; margin: 12px 0 0; padding: 0 0 0 32px; line-height: 30px; max-width: 438px; }
  li { position: relative; }
  li::before {
    content: "";
    position: absolute;
    left: -25px;
    top: 12px;
    width: 5px;
    height: 5px;
    border-radius: 50%;
    background: #666;
  }
  li b { color: #585858; }

  .done-wrap {
    width: 112px;
    height: 46px;
    margin: 18px 0 0 -24px;
    background: #9a9a9a;
  }
  .done {
    width: 112px;
    height: 46px;
    border-radius: 23px;
    background: #107c41;
    color: #fff;
    font-size: 20px;
    font-weight: 700;
    display: flex;
    align-items: center;
    justify-content: center;
    gap: 12px;
    box-shadow: inset 0 0 4px rgba(0, 0, 0, 0.4);
  }
  .done svg { width: 24px; height: 20px; }

  .composer {
    width: 517px;
    height: 123px;
    box-sizing: border-box;
    margin: 26px 0 0 -22px;
    background: #fff;
    border: 1px solid #e2e2e2;
    border-bottom-color: #999;
    border-radius: 26px;
    padding: 15px 0 0 27px;
    font-size: 20.800px;
  }
  .placeholder { line-height: 30px; color: #666; }
  .composer-tools { display: flex; align-items: center; gap: 36px; margin-top: 30px; }
  .composer-tools svg { width: 22px; height: 22px; fill: none; stroke: #555; stroke-width: 1.400; }
  .disclaimer {
    width: 517px;
    margin: 12px 0 0 -22px;
    text-align: center;
    font-size: 18px;
    line-height: 26px;
    color: #6b6b6b;
    white-space: nowrap;
  }

  .bracket { position: absolute; left: 40px; top: 102px; width: 32px; height: 400px; }
  .red-box {
    position: absolute;
    left: 45px;
    top: 506px;
    width: 125px;
    height: 58px;
    box-sizing: border-box;
    border: 6px solid #f00;
    border-radius: 9px;
  }
  .badge {
    position: absolute;
    width: 56px;
    height: 56px;
    box-sizing: border-box;
    border-radius: 50%;
    background: #fff;
    box-shadow: 1px 2px 5px rgba(0, 0, 0, 0.35);
    display: flex;
    align-items: center;
    justify-content: center;
  }
  .badge::before {
    content: "";
    position: absolute;
    inset: 3px;
    border: 2px solid #f00;
    border-radius: 50%;
  }
  .badge::after {
    content: "";
    position: absolute;
    inset: 9px 8px;
    border-radius: 50%;
    background: linear-gradient(90deg, #666, #d8d8d8 30%, #c8c8c8 70%, #777);
  }
  .badge span {
    position: relative;
    z-index: 1;
    font-family: "Liberation Sans", sans-serif;
    font-size: 49px;
    line-height: 1;
    color: #f00;
    -webkit-text-stroke: 3px #fff;
    paint-order: stroke fill;
  }
  .b8 { left: -24px; top: 274px; }
  .b9 { left: 182px; top: 519px; }

  /* status bar */
  .status {
    flex: none;
    height: 27px;
    box-sizing: border-box;
    background: #f3f3f3;
    border-top: 1px solid #cfcfcf;
    display: flex;
    align-items: center;
    font-size: 14.500px;
    color: #444;
  }
  .ready { margin-left: 14px; width: 60px; white-space: nowrap; }
  .macro { width: 20px; height: 20px; margin-left: 25px; }
  .a11y { width: 18px; height: 20px; margin-left: 22px; }
  .a11y-text { margin-left: 3px; font-size: 13px; white-space: nowrap; }
  .views { margin-left: auto; display: flex; height: 100%; }
  .view { width: 50px; display: flex; align-items: center; justify-content: center; }
  .view.current { background: #e0e0e0; }
  .view svg { width: 18px; height: 22px; fill: none; stroke: #444; stroke-width: 1.300; }
  .zoom { display: flex; align-items: center; margin: 0 26px 0 6px; gap: 6px; }
  .slider { position: relative; width: 127px; height: 1px; background: #555; }
  .slider i { position: absolute; left: 61px; top: -8px; width: 5px; height: 17px; background: #555; }
  .zoom em { font-style: normal; margin-left: 16px; font-size: 15.500px; }
</style>
